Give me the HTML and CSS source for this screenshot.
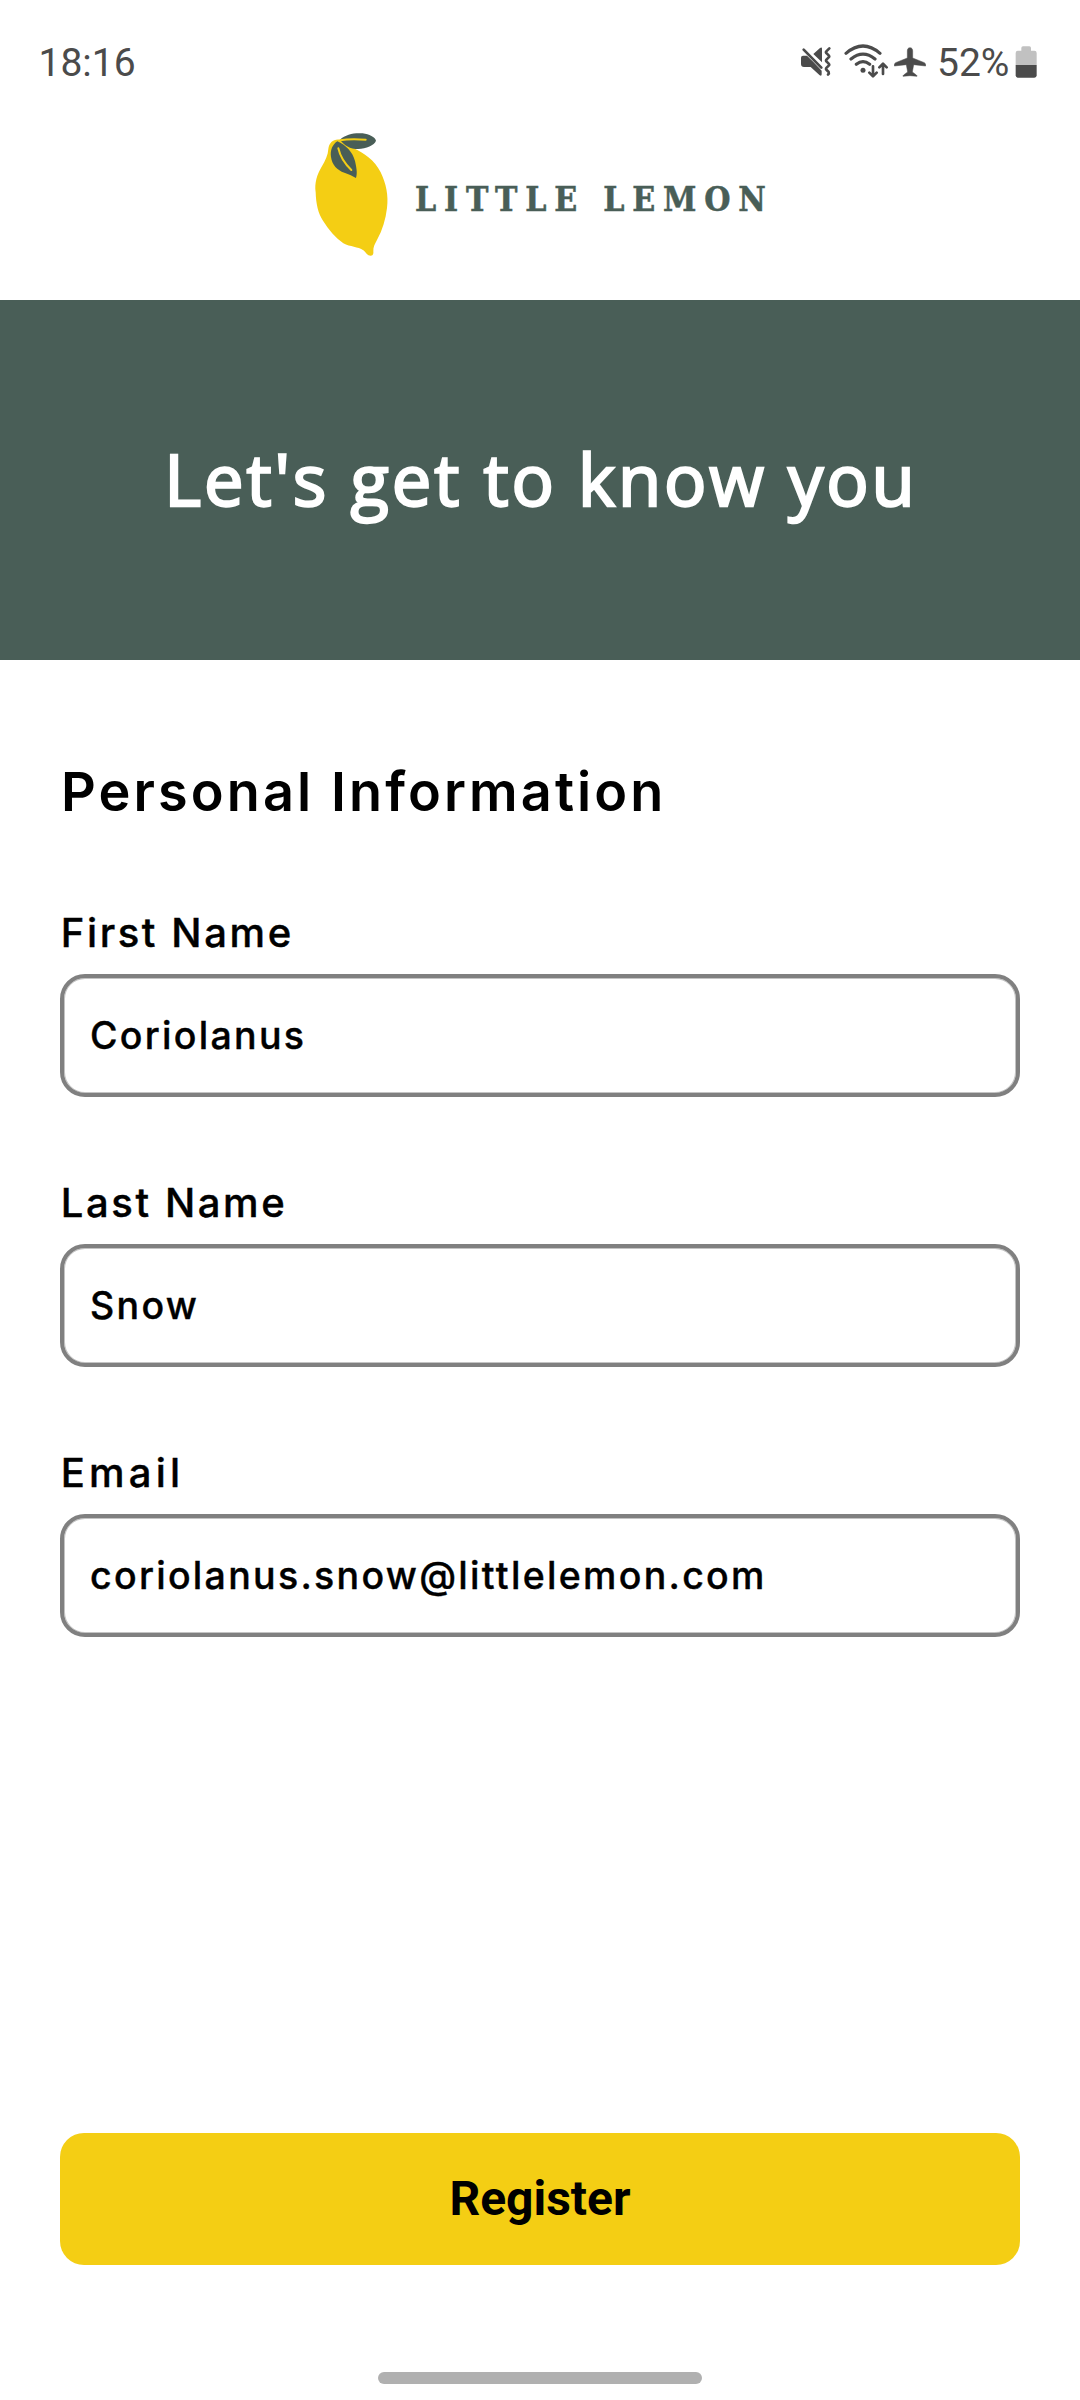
FILE: index.html
```html
<!DOCTYPE html>
<html lang="en">
<head>
<meta charset="utf-8">
<title>Little Lemon</title>
<link rel="stylesheet" href="styles.css">
</head>
<body>
<div class="screen">
  <div class="status">
    <span class="status-time">18:16</span>
    <div class="status-icons">
      <svg class="icon-mute" width="32" height="35" viewBox="60 40 96 105" aria-hidden="true">
        <path fill="#4b4b4b" d="M63 84q0-6 6-6h12L101 98l24 25v11q0 7-6 3L92 112H72q-9 0-9-9zM100 73l20-18q6-4 6 2v41z"/>
        <path fill="none" stroke="#4b4b4b" stroke-width="8" stroke-linecap="round" stroke-linejoin="round" d="M71 60l53 54M148 56l-9 9q-3 3 1 6l6 6q3 3 0 6l-6 6q-4 4 0 7l6 6q3 3 0 6l-6 6q-4 4 0 7l6 6q2 4-2 8"/>
      </svg>
      <svg class="icon-wifi" width="46" height="35" viewBox="190 40 138 105" aria-hidden="true">
        <g fill="none" stroke="#4b4b4b" stroke-width="9.5" stroke-linecap="round" stroke-linejoin="round">
          <path d="M199 71Q250 27 301 71M214 88Q250 59 286 88M230 104Q250 88 270 104"/>
          <path stroke-width="8" d="M280 110v29M269 129l11 11 11-11M310 133v-30M299 113l11-11 11 11"/>
        </g>
        <circle cx="250" cy="122" r="7.5" fill="#4b4b4b"/>
      </svg>
      <svg class="icon-plane" width="32" height="35" viewBox="343 40 96 105" aria-hidden="true">
        <path fill="#4b4b4b" stroke="#4b4b4b" stroke-width="1.5" d="M391 54c6 0 8 5 8 10v21l35 14q4 2 4 7v3l-36-4-4 22 12 9q2 1 2 4l-21-2-21 2q0-3 2-4l12-9-4-22-36 4v-3q0-5 4-7l35-14V64c0-5 2-10 8-10z"/>
      </svg>
      <span class="status-level">52%</span>
      <svg class="icon-battery" width="24" height="34" viewBox="706 45 72 102" aria-hidden="true">
        <path fill="#c1c1c1" d="M708 106V69q0-7 7-7h10v-8q0-5 5-5h19q5 0 5 5v8h10q7 0 7 7v37z"/>
        <path fill="#4b4b4b" d="M708 105h63v31q0 7-7 7h-49q-7 0-7-7z"/>
      </svg>
    </div>
  </div>

  <header class="brand">
    <svg class="brand-lemon" width="110" height="145" viewBox="0 0 330 435" aria-hidden="true">
      <path fill="#f4ce14" d="M118 59C100 57 87 69 85 87C84 105 76 122 65 140C51 164 43 188 47 217C48 251 54 280 69 302C87 330 106 353 130 370C151 381 174 380 190 391C198 397 201 407 212 407C219 407 221 402 220 394C219 382 225 371 232 358C247 330 257 299 261 264C266 227 258 190 242 157C224 120 192 100 160 84C146 76 134 66 118 59Z"/>
      <path fill="#495e57" d="M120 59C137 43 162 38 188 40C208 43 225 51 228 62C223 76 199 86 174 87C151 87 132 76 120 59ZM112 64C97 74 90 91 93 111C96 135 112 151 133 158C147 163 159 168 168 174C173 159 169 141 165 123C158 96 137 75 112 64Z"/>
      <path fill="none" stroke="#f4ce14" stroke-width="6" stroke-linecap="round" d="M120 61Q150 55 197 59M115 85C121 112 137 134 154 150"/>
    </svg>
    <span class="brand-name">LITTLE LEMON</span>
  </header>

  <div class="banner"><h1 class="banner-title">Let's get to know you</h1></div>

  <main class="form">
    <h2 class="form-title">Personal Information</h2>
    <div class="field">
      <span class="field-label">First Name</span>
      <div class="field-box">Coriolanus</div>
    </div>
    <div class="field">
      <span class="field-label">Last Name</span>
      <div class="field-box">Snow</div>
    </div>
    <div class="field">
      <span class="field-label label-wide">Email</span>
      <div class="field-box">coriolanus.snow@littlelemon.com</div>
    </div>
    <button class="register" type="button">Register</button>
  </main>
  <div class="home-bar"></div>
</div>
</body>
</html>
```
FILE: styles.css
```css
* { box-sizing: border-box; }
body { margin: 0; background: #fff; color: #000; }
.screen {
  display: flex;
  flex-direction: column;
  width: 1080px;
  height: 2400px;
  overflow: hidden;
  background: #fff;
  font-family: Inter, "Liberation Sans", sans-serif;
}
.status {
  display: flex;
  justify-content: space-between;
  height: 120px;
  padding: 38px 41px 0 38.5px;
  color: #4b4b4b;
  font: 400 39px/51px Roboto, sans-serif;
}
.status-icons { display: flex; }
.status-icons svg { margin-top: 5px; }
.icon-wifi { margin-left: 11px; }
.icon-plane { margin-left: 5px; }
.status-level { width: 72px; margin-left: 11px; }
.status-icons .icon-battery { margin: 7px 0 0 6px; }
.brand { display: flex; height: 180px; padding-left: 300px; }
.brand-name {
  margin: 49px 0 0 5px;
  color: #495e57;
  font: 700 33.5px/61px "DejaVu Serif Condensed", "DejaVu Serif", serif;
  font-stretch: condensed;
  letter-spacing: 7.8px;
  white-space: nowrap;
  -webkit-text-stroke: 0.5px #495e57;
}
.banner {
  display: flex;
  align-items: center;
  justify-content: center;
  height: 360px;
  padding: 0 0 3px 2px;
  background: #495e57;
  color: #fff;
}
.banner-title {
  margin: 0;
  font: 500 70.5px/100px "Open Sans", sans-serif;
  letter-spacing: 2.9px;
  -webkit-text-stroke: 2.4px #fff;
}
.form {
  display: flex;
  flex: 1;
  flex-direction: column;
  padding: 100px 60px 0;
}
.form-title {
  margin: 0 0 86px 1px;
  font-size: 54px;
  font-weight: 600;
  line-height: 63px;
  letter-spacing: 3.1px;
}
.field { display: flex; flex-direction: column; gap: 17px; margin-bottom: 82px; }
.field-label {
  margin-left: 0.8px;
  font-size: 40px;
  font-weight: 500;
  line-height: 48px;
  letter-spacing: 2.6px;
  -webkit-text-stroke: 0.4px #000;
}
.label-wide { letter-spacing: 4.2px; }
.field-box {
  height: 123px;
  padding-left: 26px;
  border: 4px solid #808080;
  border-radius: 25px;
  box-shadow: inset 0 0 0 1px #c4c4c4;
  font-size: 37.5px;
  font-weight: 500;
  line-height: 115px;
  letter-spacing: 2.3px;
  -webkit-text-stroke: 0.4px #000;
}
.register {
  height: 132px;
  margin-top: 414px;
  padding: 0;
  border: 0;
  border-radius: 24px;
  background: #f4ce14;
  color: #000;
  font: 700 48px/132px Roboto, sans-serif;
}
.home-bar {
  width: 324px;
  height: 12px;
  margin: 0 auto 16px;
  border-radius: 6px;
  background: #b0b0b0;
}
```
